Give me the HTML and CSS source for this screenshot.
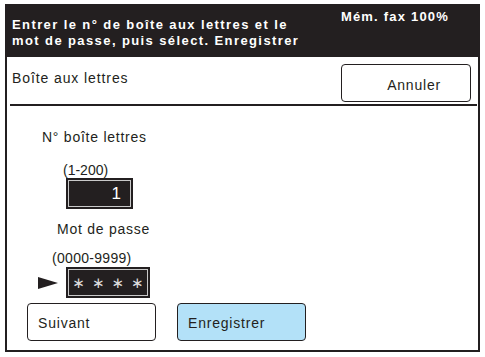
FILE: index.html
```html
<!DOCTYPE html>
<html lang="fr">
<head>
<meta charset="utf-8">
<link rel="stylesheet" href="styles.css">
</head>
<body>
<div class="screen">
  <div class="header">
    <div class="msg">Entrer le n° de boîte aux lettres et le<br>mot de passe, puis sélect. Enregistrer</div>
    <div class="mem">Mém. fax 100%</div>
  </div>
  <div class="body">
    <div class="toprow">
      <div class="title">Boîte aux lettres</div>
      <div class="btn cancel">Annuler</div>
    </div>
    <div class="divider"></div>
    <div class="content">
      <div class="label l1">N° boîte lettres</div>
      <div class="range r1">(1-200)</div>
      <div class="field f1">1</div>
      <div class="label l2">Mot de passe</div>
      <div class="range r2">(0000-9999)</div>
      <div class="pwrow">
        <svg class="arrow" width="20" height="12" viewBox="0 0 20 12"><polygon points="0,0 20,6 0,12" fill="#231f20"/></svg>
        <div class="field f2">∗∗∗∗</div>
      </div>
      <div class="buttons">
        <div class="btn next">Suivant</div>
        <div class="btn save">Enregistrer</div>
      </div>
    </div>
  </div>
</div>
</body>
</html>
```
FILE: styles.css
```css
html, body { margin: 0; padding: 0; background: #fff; }
body { font-family: "Liberation Sans", Arial, sans-serif; color: #231f20; }
.screen { margin: 4px 0 0 5px; width: 475px; }
.header { height: 53px; background: #231f20; color: #fff; display: flex; justify-content: space-between; font-weight: bold; font-size: 13px; letter-spacing: 1.4px; }
.msg { padding: 13px 0 0 7px; line-height: 15.5px; }
.mem { padding: 5px 31px 0 0; letter-spacing: 1.2px; }
.body { height: 295px; border: 2px solid #231f20; border-top: none; box-sizing: border-box; }
.toprow { display: flex; justify-content: space-between; align-items: flex-start; height: 47px; }
.title { font-size: 14px; padding: 13px 0 0 5px; letter-spacing: 0.9px; }
.btn { box-sizing: border-box; border: 1px solid #231f20; border-radius: 4px; font-size: 14px; display: flex; align-items: center; }
.cancel { width: 130px; height: 38px; margin: 7px 7px 0 0; justify-content: flex-end; padding: 4px 29px 0 0; letter-spacing: 0.8px; }
.divider { height: 2px; background: #231f20; margin: 0 1px 0 3px; }
.label { font-size: 14px; letter-spacing: 0.75px; }
.l1 { padding: 23px 0 0 35px; }
.range { font-size: 14px; letter-spacing: 0; }
.r1 { padding: 17px 0 0 56px; }
.field { box-sizing: border-box; background: #231f20; color: #fff; border: 1px solid #231f20; box-shadow: inset 0 0 0 1px #231f20, inset 0 0 0 2px #c9c9c9; display: flex; align-items: center; justify-content: flex-end; }
.f1 { width: 67px; height: 31px; margin-left: 59px; padding-right: 11px; font-size: 17px; }
.l2 { padding: 12px 0 0 50px; }
.r2 { padding: 13px 0 0 45px; letter-spacing: 0.3px; }
.pwrow { display: flex; align-items: center; margin-top: 1px; }
.arrow { margin-left: 31px; }
.f2 { width: 84px; height: 31px; margin-left: 8px; justify-content: center; font-family: "DejaVu Sans", sans-serif; font-size: 15px; letter-spacing: 7px; padding-left: 7px; color: #dcdcdc; }
.buttons { display: flex; gap: 21px; margin: 5px 0 0 20px; }
.next, .save { width: 129px; height: 38px; padding: 2px 0 0 10px; letter-spacing: 0.8px; }
.save { background: #b3e1f8; }
```
